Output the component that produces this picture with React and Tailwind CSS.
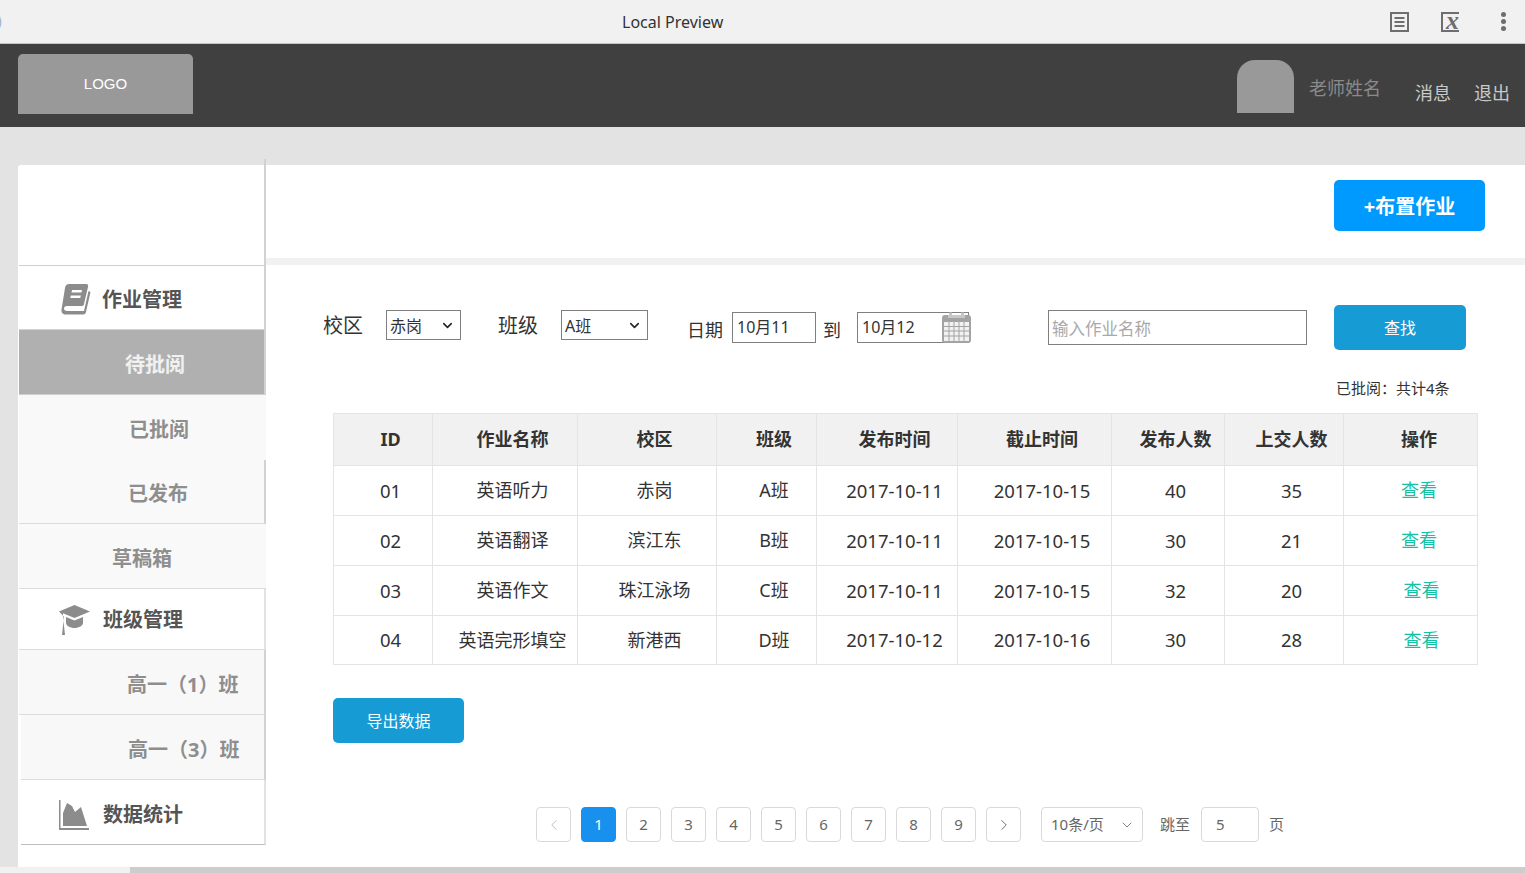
import { ChevronDown, ChevronLeft, ChevronRight } from "lucide-react";

const rows = [
  ["01", "英语听力", "赤岗", "A班", "2017-10-11", "2017-10-15", "40", "35", "pl-[17px]", "h-[50px]"],
  ["02", "英语翻译", "滨江东", "B班", "2017-10-11", "2017-10-15", "30", "21", "pl-[17px]", "h-[50px]"],
  ["03", "英语作文", "珠江泳场", "C班", "2017-10-11", "2017-10-15", "32", "20", "pl-[22px]", "h-[50px]"],
  ["04", "英语完形填空", "新港西", "D班", "2017-10-12", "2017-10-16", "30", "28", "pl-[22px]", "h-[48px]"],
];

const heads = ["ID", "作业名称", "校区", "班级", "发布时间", "截止时间", "发布人数", "上交人数", "操作"];
const cols = ["w-[99px]", "w-[145px]", "w-[139px]", "w-[100px]", "w-[141px]", "w-[154px]", "w-[113px]", "w-[119px]", "w-[133px]"];
// id, dates and counts run a bit wider than the chinese cells
const cellText = ["text-[18.5px]", "text-[18px]", "text-[18px]", "text-[18px]", "text-[18.5px]", "text-[18.5px]", "text-[18.5px]", "text-[18.5px]"];

function BookIcon() {
  return (
    <svg width="30" height="31" viewBox="0 0 30 31" fill="#8c8c8c">
      <path d="M8 0h17c2 0 2.500 1 2 3l-4 17c-.4 1.500-1 2-2.500 2H6c-2 0-3 1-3 2.500S4 27 6 27h17l4.500-20 2 1-4.500 20c-.3 1.500-1 2.500-3 2.500H5c-3 0-5-2-4.500-5L4 4c.4-2.500 2-4 4-4zm3 6-.5 2.500h10L21 6zm-1.200 5.500L9.300 14h10l.5-2.500z" fillRule="evenodd" />
    </svg>
  );
}

function CapIcon() {
  return (
    <svg width="31" height="31" viewBox="0 0 31 31" fill="#8c8c8c">
      <path d="M15.500 0 31 6.500 15.500 13 4 8.300v3L5 21l1 9H3l1-9 .8-9.500L0 6.500z" />
      <path d="M7 12l8.500 3.500L24 12v6c0 2.500-4 5-8.500 5S7 20.500 7 18z" />
    </svg>
  );
}

function ChartIcon() {
  return (
    <svg width="30" height="30" viewBox="0 0 30 30" fill="#8c8c8c">
      <path d="M0 0h1.500v28H30v2H0z" />
      <path d="M4 26V13l4-10 5 3 3 6 6-5 6 19z" />
    </svg>
  );
}

function CalendarIcon() {
  return (
    <svg width="29" height="31" viewBox="0 0 29 31" fill="none">
      <rect x="0" y="3" width="29" height="28" rx="3" fill="#a3a3a3" />
      <rect x="7" y="0" width="3" height="7" fill="#a3a3a3" />
      <rect x="19" y="0" width="3" height="7" fill="#a3a3a3" />
      <rect x="6" y="1" width="17" height="5" fill="#fff" opacity="0.4" />
      <path d="M2 10h25v19H2z" fill="#f1f1f1" />
      <path d="M2 14.500h25M2 19h25M2 24h25M7 10v19M12 10v19M17 10v19M22 10v19" stroke="#a3a3a3" strokeWidth="1" />
    </svg>
  );
}

function SideGroup({ icon, label, iconClass, className }) {
  return (
    <div className={`flex items-center bg-white border-b ${className}`}>
      <span className={iconClass}>{icon}</span>
      <span className="text-[20px] font-bold text-[#555]">{label}</span>
    </div>
  );
}

function SideSub({ label, className }) {
  return <div className={`flex items-center text-[20px] font-bold ${className}`}>{label}</div>;
}

function PageBtn({ children, active }) {
  return (
    <div
      className={`w-[35px] h-[35px] flex items-center justify-center rounded-[4px] border text-[15px] ${
        active ? "bg-[#1890ee] border-[#1890ee] text-white" : "bg-white border-[#d9d9d9] text-[#666]"
      }`}
    >
      {children}
    </div>
  );
}

export default function App() {
  return (
    <div className="w-[1525px] h-[873px] overflow-hidden bg-[#e3e3e3] flex flex-col font-['Noto_Sans','Noto_Sans_CJK_SC',sans-serif]">
      {/* preview bar */}
      <div className="h-[44px] shrink-0 bg-[#f1f1f1] border-b border-[#c4c4c4] flex items-center relative">
        <span className="absolute -left-[3px] top-[9px] text-[16px] text-[#a9b6c6]">)</span>
        <span className="ml-[622px] text-[16px] text-[#333]">Local Preview</span>
        <div className="ml-auto flex items-center mr-[19px]">
          <svg width="19" height="20" viewBox="0 0 19 20" className="mr-[32px]" fill="none">
            <rect x="1" y="1" width="17" height="18" stroke="#6e6e6e" strokeWidth="2" />
            <path d="M4.500 6h10M4.500 10h10M4.500 14h10" stroke="#6e6e6e" strokeWidth="2" />
          </svg>
          <div className="relative w-[18px] h-[20px] mr-[42px] border-2 border-[#6e6e6e] border-r-0">
            <span className="absolute left-[3px] -top-[11px] font-['Liberation_Serif',serif] italic font-bold text-[26px] leading-[36px] text-[#6e6e6e]">x</span>
          </div>
          <div className="flex flex-col gap-[2px]">
            <span className="w-[5px] h-[5px] rounded-full bg-[#6e6e6e]" />
            <span className="w-[5px] h-[5px] rounded-full bg-[#6e6e6e]" />
            <span className="w-[5px] h-[5px] rounded-full bg-[#6e6e6e]" />
          </div>
        </div>
      </div>

      {/* header */}
      <div className="h-[83px] shrink-0 bg-[#404040] flex pl-[18px] relative">
        <div className="mt-[10px] w-[175px] h-[60px] bg-[#999] rounded-t-[5px] flex items-center justify-center text-[15px] text-white font-['Liberation_Sans',sans-serif]">
          LOGO
        </div>
        <div className="ml-auto flex pr-[15px]">
          <div className="mt-[16px] w-[57px] h-[53px] bg-[#999] rounded-t-[18px]" />
          <span className="ml-[15px] mt-[31px] text-[18px] leading-[26px] text-[#8a8a8a]">老师姓名</span>
          <span className="ml-[34px] mt-[36px] text-[18px] leading-[26px] text-[#c9c9c9]">消息</span>
          <span className="ml-[23px] mt-[36px] text-[18px] leading-[26px] text-[#c9c9c9]">退出</span>
        </div>
      </div>

      {/* body */}
      <div className="flex-1 flex pl-[18px] pt-[38px] min-h-0">
        {/* sidebar */}
        <div className="w-[248px] shrink-0 bg-white flex flex-col rounded-tl-[3px] relative pl-px">
          <span className="absolute right-0 -top-[6px] w-[2px] h-[6px] bg-[#d2d2d2]" />
          <div className="h-[101px] border-b border-[#cfcfcf] border-r-2 border-r-[#d2d2d2]" />
          <SideGroup
            icon={<BookIcon />}
            label="作业管理"
            iconClass="ml-[42px] mr-[11px]"
            className="h-[64px] pt-[4px] border-[#d2d2d2] border-r-2 border-r-[#d2d2d2]"
          />
          <SideSub label="待批阅" className="h-[65px] pt-[6px] pl-[106px] bg-[#b0b0b0] text-[#f1f1f1] border-b border-[#cfcfcf] border-r-2 border-r-[#d2d2d2]" />
          <SideSub label="已批阅" className="h-[65px] pt-[4px] pl-[110px] bg-[#f9f9f9] text-[#8e8e8e]" />
          <SideSub label="已发布" className="h-[64px] pt-[5px] pl-[109px] bg-[#f9f9f9] text-[#8e8e8e] border-b border-[#dcdcdc] border-r-2 border-r-[#d2d2d2]" />
          <SideSub label="草稿箱" className="h-[65px] pt-[6px] pl-[93px] bg-[#f9f9f9] text-[#8e8e8e] border-b border-[#dcdcdc]" />
          <SideGroup
            icon={<CapIcon />}
            label="班级管理"
            iconClass="ml-[40px] mr-[13px]"
            className="h-[61px] pt-[2px] border-[#dcdcdc] border-r-2 border-r-[#e2e2e2]"
          />
          <SideSub label="高一（1）班" className="h-[65px] pt-[6px] pl-[108px] bg-[#f8f8f8] text-[#8e8e8e] border-b border-[#dcdcdc] border-r-2 border-r-[#d2d2d2]" />
          <SideSub label="高一（3）班" className="h-[65px] pt-[6px] pl-[107px] ml-[2px] bg-[#f8f8f8] text-[#8e8e8e] border-b border-[#dcdcdc] border-r-2 border-r-[#d2d2d2]" />
          <SideGroup
            icon={<ChartIcon />}
            label="数据统计"
            iconClass="ml-[38px] mr-[14px]"
            className="h-[65px] pt-[5px] ml-[2px] border-[#bdbdbd] border-r-2 border-r-[#e2e2e2]"
          />
        </div>

        {/* main */}
        <div className="flex-1 bg-white min-w-0 flex flex-col">
          <div className="h-[100px] shrink-0 border-b-[7px] border-[#f1f1f1] pt-[15px] pl-[1068px]">
            <div className="w-[151px] h-[51px] pt-[2px] rounded-[5px] bg-[#0099fe] text-white text-[20px] font-bold flex items-center justify-center">
              +布置作业
            </div>
          </div>

          {/* filters */}
          <div className="h-[85px] shrink-0 flex items-start text-[#333]">
            <span className="ml-[57px] mt-[47px] text-[20px] leading-[28px]">校区</span>
            <div className="ml-[23px] mt-[45px] w-[75px] h-[30px] pt-[1px] border border-[#7f7f7f] flex items-center justify-between pl-[3px] pr-[5px] text-[16px]">
              赤岗<ChevronDown size={15} strokeWidth={2.500} className="text-[#222]" />
            </div>
            <span className="ml-[37px] mt-[47px] text-[20px] leading-[28px]">班级</span>
            <div className="ml-[23px] mt-[45px] w-[87px] h-[30px] pt-[1px] border border-[#7f7f7f] flex items-center justify-between pl-[3px] pr-[5px] text-[16px]">
              A班<ChevronDown size={15} strokeWidth={2.500} className="text-[#222]" />
            </div>
            <span className="ml-[39px] mt-[52px] text-[18px] leading-[26px]">日期</span>
            <div className="ml-[9px] mt-[47px] w-[84px] h-[31px] border border-[#7f7f7f] pl-[4px] text-[16px] leading-[29px]">10月11</div>
            <span className="ml-[7px] mt-[52px] text-[18px] leading-[26px]">到</span>
            <div className="relative ml-[16px] mt-[47px] w-[112px] h-[31px] border border-[#7f7f7f] pl-[4px] text-[16px] leading-[29px]">
              10月12
              <span className="absolute -right-[3px] -top-[1px]"><CalendarIcon /></span>
            </div>
            <div className="ml-[79px] mt-[45px] w-[259px] h-[35px] border border-[#7f7f7f] pl-[3px] text-[16.5px] leading-[35px] text-[#a9a9a9]">输入作业名称</div>
            <div className="ml-[27px] mt-[40px] w-[132px] h-[45px] rounded-[5px] bg-[#169bd5] text-white text-[16px] flex items-center justify-center">查找</div>
          </div>

          <div className="h-[63px] shrink-0 pl-[1070px] pt-[28px] text-[15px] leading-[20px] text-[#333]">已批阅：共计4条</div>

          {/* table */}
          <div className="ml-[67px] w-[1145px] border border-[#e4e4e4] shrink-0">
            <div className="flex h-[52px] bg-[#f1f1f1] border-b border-[#e4e4e4]">
              {heads.map((h, i) => (
                <div
                  key={h}
                  className={`${cols[i]} ${i < 8 ? "pl-[15px] border-r border-[#e4e4e4]" : "pl-[17px]"} flex items-center justify-center text-[18px] font-bold text-[#333]`}
                >
                  {h}
                </div>
              ))}
            </div>
            {rows.map((r, ri) => (
              <div key={r[0]} className={`flex ${r[9]} ${ri < 3 ? "border-b border-[#e4e4e4]" : ""}`}>
                {r.slice(0, 8).map((c, i) => (
                  <div
                    key={i}
                    className={`${cols[i]} ${cellText[i]} pl-[15px] flex items-center justify-center text-[#333] border-r border-[#e4e4e4]`}
                  >
                    {c}
                  </div>
                ))}
                <div className={`${cols[8]} ${r[8]} flex items-center justify-center text-[18px] text-[#13c2a4]`}>查看</div>
              </div>
            ))}
          </div>

          <div className="ml-[67px] mt-[33px] w-[131px] h-[45px] shrink-0 rounded-[5px] bg-[#169bd5] text-white text-[16px] flex items-center justify-center">
            导出数据
          </div>

          {/* pagination */}
          <div className="ml-[270px] mt-[64px] flex items-center text-[15px] text-[#666] shrink-0">
            <div className="flex gap-[10px]">
              <PageBtn><ChevronLeft size={18} strokeWidth={1.250} className="text-[#bbb]" /></PageBtn>
              {[1, 2, 3, 4, 5, 6, 7, 8, 9].map((n) => (
                <PageBtn key={n} active={n === 1}>{n}</PageBtn>
              ))}
              <PageBtn><ChevronRight size={18} strokeWidth={1.250} /></PageBtn>
            </div>
            <div className="ml-[20px] w-[102px] h-[35px] rounded-[4px] border border-[#d9d9d9] flex items-center justify-between pl-[9px] pr-[7px]">
              10条/页<ChevronDown size={16} strokeWidth={1.250} />
            </div>
            <span className="ml-[17px]">跳至</span>
            <div className="ml-[11px] w-[58px] h-[35px] rounded-[4px] border border-[#d9d9d9] flex items-center pl-[14px]">5</div>
            <span className="ml-[10px]">页</span>
          </div>
        </div>
      </div>

      {/* scrollbar */}
      <div className="h-[6px] shrink-0 bg-[#f1f1f1] -mt-[6px] relative">
        <div className="ml-[130px] h-full bg-[#cdcdcd]" />
      </div>
    </div>
  );
}
